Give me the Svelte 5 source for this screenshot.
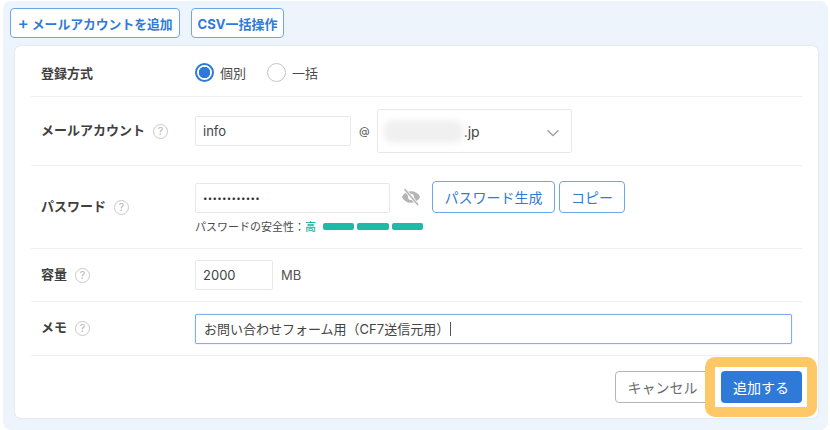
<script>
  const rows = 3;
</script>

<div class="panel">
  <div class="toolbar">
    <button class="btn outline strong add"><span class="plus">+</span>メールアカウントを追加</button>
    <button class="btn outline strong csv">CSV一括操作</button>
  </div>
  <div class="card">
    <div class="row r1">
      <div class="label">登録方式</div>
      <div class="field">
        <span class="radio on"></span><span class="rtext">個別</span>
        <span class="radio"></span><span class="rtext">一括</span>
      </div>
    </div>
    <div class="row r2">
      <div class="label lift">メールアカウント<span class="help">?</span></div>
      <div class="field">
        <div class="input account">info</div>
        <span class="at">@</span>
        <div class="input select">
          <span class="blur"></span><span class="jp">.jp</span>
          <svg class="chev" width="14" height="8" viewBox="0 0 14 8"><path d="M1.5 1.2 7 6.6l5.5-5.4" fill="none" stroke="#9a9a9a" stroke-width="1.3"/></svg>
        </div>
      </div>
    </div>
    <div class="row r3">
      <div class="label lift">パスワード<span class="help">?</span></div>
      <div class="stack">
        <div class="field">
          <div class="input pass">••••••••••••</div>
          <svg class="eye" width="20" height="18" viewBox="0 0 20 18">
            <path d="M.8 9C2.800 5.200 6 3.200 10 3.200S17.200 5.200 19.200 9C17.200 12.800 14 14.800 10 14.800S2.800 12.800.8 9z" fill="#b5b5b5"/>
            <circle cx="10" cy="9" r="3" fill="#fff"/>
            <path d="M3.500 1 17 17" stroke="#fff" stroke-width="3.200"/>
            <path d="M3.500 1 17 17" stroke="#b5b5b5" stroke-width="1.600"/>
          </svg>
          <button class="btn outline gen">パスワード生成</button>
          <button class="btn outline copy">コピー</button>
        </div>
        <div class="strength">
          <span>パスワードの安全性：</span><b>高</b>
          <div class="bars">
            {#each Array(rows) as _}
              <i></i>
            {/each}
          </div>
        </div>
      </div>
    </div>
    <div class="row r4">
      <div class="label lift">容量<span class="help">?</span></div>
      <div class="field">
        <div class="input quota">2000</div>
        <span class="mb">MB</span>
      </div>
    </div>
    <div class="row r5">
      <div class="label lift">メモ<span class="help">?</span></div>
      <div class="field">
        <div class="input memo">お問い合わせフォーム用（CF7送信元用）<span class="caret"></span></div>
      </div>
    </div>
    <div class="actions">
      <button class="btn cancel">キャンセル</button>
      <div class="highlight"><button class="btn primary">追加する</button></div>
    </div>
  </div>
</div>

<style>
  :global(body) {
    margin: 0;
    background: #fff;
  }
  .panel {
    width: 825px;
    height: 429px;
    margin: 1px 0 0 3px;
    box-sizing: border-box;
    background: #eef4fc;
    border-radius: 8px;
    padding: 7px 0 0 7px;
    font-family: Inter, "Noto Sans CJK JP", sans-serif;
    color: #3c3c3c;
    overflow: hidden;
  }
  .toolbar {
    display: flex;
    gap: 11px;
    height: 30px;
  }
  .btn {
    box-sizing: border-box;
    font-family: inherit;
    font-size: 14px;
    border-radius: 4px;
    padding: 0;
    background: #fff;
    display: flex;
    align-items: center;
    justify-content: center;
    letter-spacing: 0;
  }
  .outline {
    border: 1px solid #6ea6ea;
    color: #2f7ad9;
  }
  .strong { font-weight: 700; font-size: 13px; }
  .add { width: 170px; height: 30px; font-size: 12.800px; }
  .plus { font-size: 17px; margin-right: 3px; font-weight: 500; }
  .csv { width: 93px; height: 30px; }
  .card {
    box-sizing: border-box;
    width: 803px;
    height: 372px;
    margin: 8px 0 0 5px;
    background: #fff;
    border-radius: 6px;
    padding: 0 16px;
    box-shadow: 0 0 2px rgba(90, 120, 160, .22);
  }
  .row {
    display: flex;
    align-items: center;
    border-bottom: 1px solid #f0f0f0;
    box-sizing: border-box;
  }
  .r1 { height: 51px; padding-top: 3px; }
  .r2 { height: 69px; }
  .r3 { height: 83px; }
  .r4 { height: 53px; }
  .r5 { height: 54px; }
  .label {
    width: 164px;
    padding-left: 10px;
    box-sizing: border-box;
    flex: none;
    font-size: 13px;
    font-weight: 700;
    color: #3f3f3f;
    display: flex;
    align-items: center;
  }
  .lift { padding-bottom: 4px; }
  .help {
    box-sizing: border-box;
    width: 15px;
    height: 15px;
    margin: 4px 0 0 8px;
    border: 1px solid #c9c9c9;
    border-radius: 50%;
    color: #b5b5b5;
    font-size: 10.500px;
    font-weight: 400;
    display: flex;
    align-items: center;
    justify-content: center;
  }
  .field {
    display: flex;
    align-items: center;
    flex: 1;
  }
  .radio {
    box-sizing: border-box;
    width: 19px;
    height: 19px;
    border-radius: 50%;
    border: 1px solid #c6c6c6;
    background: #fff;
    margin-right: 6px;
    flex: none;
  }
  .radio.on {
    border: 2px solid #2f7ad9;
    background: radial-gradient(circle, #2f7ad9 0 5.500px, #fff 6px);
  }
  .rtext {
    font-size: 13px;
    margin-right: 21px;
    color: #4a4a4a;
  }
  .input {
    box-sizing: border-box;
    height: 30px;
    border: 1px solid #e8e8e8;
    border-radius: 2px;
    font-size: 13px;
    color: #444;
    display: flex;
    align-items: center;
    padding-left: 7px;
    background: #fff;
    flex: none;
  }
  .account { width: 156px; }
  .at {
    font-size: 11px;
    margin: 0 7px 0 8px;
    color: #555;
  }
  .select {
    width: 195px;
    height: 44px;
    position: relative;
    padding-left: 5px;
  }
  .blur {
    width: 81px;
    height: 23px;
    border-radius: 11px;
    background: #f0f0f0;
    filter: blur(3px);
    flex: none;
  }
  .jp { font-size: 14px; }
  .chev { position: absolute; right: 11px; top: 19px; }
  .stack { flex: 1; padding-top: 1px; }
  .pass {
    width: 195px;
    margin-top: 1px;
    font-size: 8px;
    letter-spacing: .25px;
    color: #333;
  }
  .eye { margin: 0 11px 0 11px; flex: none; }
  .gen { width: 123px; height: 32px; font-weight: 400; }
  .copy { width: 66px; height: 32px; margin-left: 4px; }
  .strength {
    display: flex;
    align-items: center;
    margin-top: 5px;
    font-size: 11px;
    color: #4a4a4a;
    height: 16px;
  }
  .strength b { color: #20b8a6; font-weight: 500; }
  .bars { display: flex; gap: 3px; margin-left: 7px; }
  .bars i {
    display: block;
    width: 31.300px;
    height: 7px;
    border-radius: 2px;
    background: #20b8a6;
  }
  .quota { width: 78px; }
  .mb { font-size: 13px; margin-left: 8px; color: #555; }
  .memo {
    width: 597px;
    height: 30px;
    border: 1px solid #7fb0ea;
    box-shadow: 0 0 1px #7fb0ea;
    padding-left: 8px;
    font-size: 13px;
  }
  .caret {
    width: 1px;
    height: 14px;
    background: #555;
    margin-left: 1px;
  }
  .actions {
    display: flex;
    justify-content: flex-end;
    align-items: center;
    height: 62px;
    position: relative;
  }
  .cancel {
    width: 95px;
    height: 32px;
    border: 1px solid #b5b5b5;
    color: #6c6c6c;
  }
  .highlight {
    box-sizing: border-box;
    width: 112px;
    height: 60px;
    border: 10px solid #fdc865;
    border-radius: 10px;
    margin-right: -15px;
    margin-left: -5px;
    background: #fff;
    display: flex;
    align-items: center;
    justify-content: center;
    position: relative;
  }
  .primary {
    width: 81px;
    height: 32px;
    border: none;
    background: #2f7ad9;
    color: #fff;
    flex: none;
  }
</style>
